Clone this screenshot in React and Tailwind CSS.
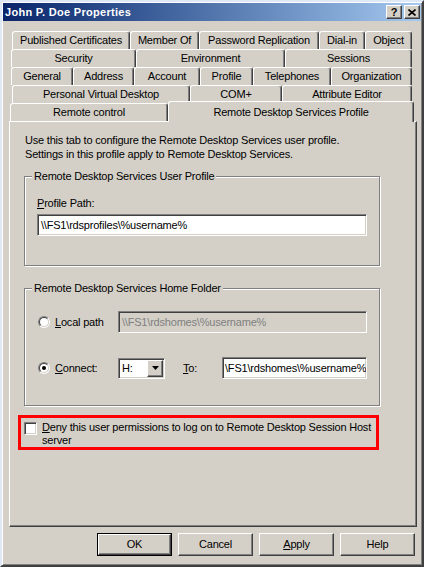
import React from "react";

const tabBase =
  "h-[18px] flex items-center justify-center whitespace-nowrap border-t border-l border-r border-t-white border-l-white border-r-[#404040] rounded-tl-[3px] rounded-tr-[3px] shadow-[inset_-1px_0_0_#808080] bg-[#d4d0c8]";

function Tab({ className, children }) {
  return <div className={tabBase + " " + className}>{children}</div>;
}

const raised =
  "bg-[#d4d0c8] border-t border-l border-r border-b border-t-white border-l-white border-r-[#404040] border-b-[#404040] shadow-[inset_-1px_-1px_0_#808080]";

const sunken =
  "border-t border-l border-r border-b border-t-[#808080] border-l-[#808080] border-r-white border-b-white shadow-[inset_1px_1px_0_#404040,inset_-1px_-1px_0_#d4d0c8]";

function TitleBtn({ children }) {
  return (
    <div className={"w-[16px] h-[14px] flex items-center justify-center " + raised}>
      {children}
    </div>
  );
}

function Radio({ checked }) {
  return (
    <div className="w-[12px] h-[12px] shrink-0 rounded-full border border-t-[#808080] border-l-[#808080] border-r-white border-b-white">
      <div className="w-full h-full rounded-full border border-t-[#404040] border-l-[#404040] border-r-[#d4d0c8] border-b-[#d4d0c8] bg-white flex items-center justify-center">
        {checked && <div className="w-[4px] h-[4px] rounded-full bg-black" />}
      </div>
    </div>
  );
}

function Button({ children, isDefault }) {
  if (isDefault) {
    return (
      <div className="w-[75px] h-[23px] border border-black">
        <div className={"w-full h-full flex items-center justify-center " + raised}>{children}</div>
      </div>
    );
  }
  return (
    <div className={"w-[75px] h-[23px] flex items-center justify-center " + raised}>{children}</div>
  );
}

export default function App() {
  return (
    <div className="w-[424px] h-[567px] bg-[#d4d0c8] border-2 border-t-[#dfe8f5] border-l-[#dfe8f5] border-r-[#404040] border-b-[#404040] shadow-[inset_1px_1px_0_#fff,inset_-1px_-1px_0_#808080] flex flex-col font-['Liberation_Sans',Arial,sans-serif] text-[11px] text-black tracking-[-0.2px] overflow-hidden">
      {/* Title bar */}
      <div className="mx-[1px] mt-[1px] h-[18px] flex items-center bg-linear-to-r from-[#0a246a] to-[#a6caf0] pl-[2px] pr-[1px]">
        <span className="flex-1 text-white font-bold text-[11px] leading-[18px] tracking-[0.3px]">
          John P. Doe Properties
        </span>
        <div className="flex gap-[2px]">
          <TitleBtn>
            <span className="font-bold text-[11px] leading-none tracking-[0px]">?</span>
          </TitleBtn>
          <TitleBtn>
            <svg width="8" height="7" viewBox="0 0 8 7">
              <path d="M0.5 0.5 L7.5 6.5 M7.5 0.5 L0.5 6.5" stroke="#000" strokeWidth="1.6" />
            </svg>
          </TitleBtn>
        </div>
      </div>

      {/* Content */}
      <div className="flex flex-col pl-[7px] pr-[5px] mt-[10px]">
        {/* Tab rows */}
        <div className="flex ml-[3px]">
          <Tab className="w-[118px]">Published Certificates</Tab>
          <Tab className="w-[69px]">Member Of</Tab>
          <Tab className="w-[120px]">Password Replication</Tab>
          <Tab className="w-[46px]">Dial-in</Tab>
          <Tab className="w-[47px]">Object</Tab>
        </div>
        <div className="flex ml-[2px]">
          <Tab className="w-[125px]">Security</Tab>
          <Tab className="w-[149px]">Environment</Tab>
          <Tab className="w-[127px]">Sessions</Tab>
        </div>
        <div className="flex ml-[2px]">
          <Tab className="w-[62px]">General</Tab>
          <Tab className="w-[61px]">Address</Tab>
          <Tab className="w-[66px]">Account</Tab>
          <Tab className="w-[53px]">Profile</Tab>
          <Tab className="w-[78px]">Telephones</Tab>
          <Tab className="w-[81px]">Organization</Tab>
        </div>
        <div className="flex ml-[3px]">
          <Tab className="w-[178px]">Personal Virtual Desktop</Tab>
          <Tab className="w-[92px]">COM+</Tab>
          <Tab className="w-[130px]">Attribute Editor</Tab>
        </div>
        <div className="flex ml-[1px] items-start">
          <Tab className="w-[158px]">Remote control</Tab>
          <div className="w-[246px] h-[21px] -mt-[2px] -mb-[1px] relative z-10 flex justify-center pt-[2px] whitespace-nowrap border-t border-l border-r border-t-white border-l-white border-r-[#404040] rounded-tl-[3px] rounded-tr-[3px] shadow-[inset_-1px_0_0_#808080] bg-[#d4d0c8]">
            Remote Desktop Services Profile
          </div>
        </div>

        {/* Panel */}
        <div className="h-[406px] border border-t-white border-l-white border-r-[#404040] border-b-[#404040] shadow-[inset_-1px_-1px_0_#808080] flex flex-col pl-[8px] pt-[11px]">
          <div className="ml-[7px] leading-[14px]">
            Use this tab to configure the Remote Desktop Services user profile.
            <br />
            Settings in this profile apply to Remote Desktop Services.
          </div>

          {/* Group 1 */}
          <div className="relative ml-[6px] mt-[15px] w-[356px] border border-[#808080] shadow-[inset_1px_1px_0_#fff,1px_1px_0_#fff] pl-[12px] pt-[19px] pb-[29px]">
            <span className="absolute -top-[8px] left-[7px] px-[2px] bg-[#d4d0c8] leading-[14px] whitespace-nowrap">
              Remote Desktop Services User Profile
            </span>
            <div className="leading-[14px]">
              <span className="underline">P</span>rofile Path:
            </div>
            <div className={"mt-[4px] w-[330px] h-[22px] bg-white flex items-center pl-[3px] whitespace-nowrap overflow-hidden " + sunken}>
              \\FS1\rdsprofiles\%username%
            </div>
          </div>

          {/* Group 2 */}
          <div className="relative ml-[6px] mt-[22px] w-[356px] border border-[#808080] shadow-[inset_1px_1px_0_#fff,1px_1px_0_#fff] pl-[12px] pt-[22px] pb-[26px]">
            <span className="absolute -top-[8px] left-[7px] px-[2px] bg-[#d4d0c8] leading-[14px] whitespace-nowrap">
              Remote Desktop Services Home Folder
            </span>
            <div className="flex items-center h-[22px]">
              <div className="ml-[1px]">
                <Radio />
              </div>
              <div className="ml-[5px] w-[63px]">
                <span className="underline">L</span>ocal path
              </div>
              <div className={"w-[249px] h-[22px] flex items-center pl-[3px] text-[#808080] whitespace-nowrap overflow-hidden " + sunken}>
                \\FS1\rdshomes\%username%
              </div>
            </div>
            <div className="flex items-center h-[22px] mt-[24px]">
              <div className="ml-[1px]">
                <Radio checked />
              </div>
              <div className="ml-[5px] w-[63px]">
                <span className="underline">C</span>onnect:
              </div>
              <div className={"w-[47px] h-[21px] bg-white flex items-center " + sunken}>
                <span className="flex-1 pl-[3px]">H:</span>
                <div className={"w-[16px] h-[17px] mr-[1px] flex items-center justify-center " + raised}>
                  <svg width="7" height="4" viewBox="0 0 7 4">
                    <path d="M0 0 H7 L3.5 4 Z" fill="#000" />
                  </svg>
                </div>
              </div>
              <div className="ml-[18px] w-[39px]">
                <span className="underline">T</span>o:
              </div>
              <div className={"w-[145px] h-[22px] bg-white flex items-center pl-[2px] whitespace-nowrap overflow-hidden " + sunken}>
                \FS1\rdshomes\%username%
              </div>
            </div>
          </div>

          {/* Red highlighted checkbox */}
          <div className="mt-[9px] w-[361px] h-[35px] border-[3px] border-[#ff0000] flex items-start pl-[3px] pt-[3px]">
            <div className={"mt-[1px] w-[13px] h-[13px] shrink-0 bg-white " + sunken} />
            <div className="ml-[5px] leading-[13px]">
              <span className="underline">D</span>eny this user permissions to log on to Remote Desktop Session Host
              <br />
              server
            </div>
          </div>
        </div>

        {/* Buttons */}
        <div className="flex justify-end gap-[6px] mt-[6px] mr-[2px]">
          <Button isDefault>OK</Button>
          <Button>Cancel</Button>
          <Button>
            <span>
              <span className="underline">A</span>pply
            </span>
          </Button>
          <Button>Help</Button>
        </div>
      </div>
    </div>
  );
}
